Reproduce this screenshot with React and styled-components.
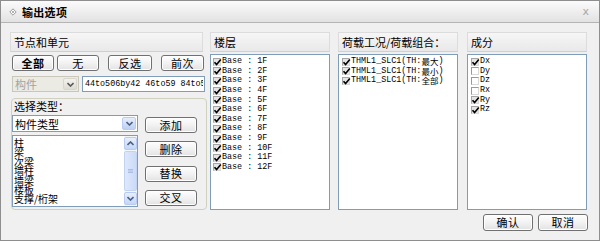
import React from "react";
import styled, { createGlobalStyle } from "styled-components";

const GlobalStyle = createGlobalStyle`
  html, body { margin: 0; padding: 0; background: #ffffff; }
  body { font-family: "Noto Sans CJK SC", "Noto Sans", sans-serif; font-size: 11px; color: #000; }
  * { box-sizing: border-box; }
`;

const Dialog = styled.div`
  width: 600px;
  height: 241px;
  border: 1px solid #8e8e8e;
  background: #f0f0f0;
  display: flex;
  flex-direction: column;
  overflow: hidden;
`;

const TitleBar = styled.div`
  height: 22px;
  flex: none;
  display: flex;
  align-items: center;
  padding: 0 10px 0 8px;
  background: linear-gradient(#fbfbfb, #e2e2e2);
  border-bottom: 1px solid #b4b4b4;
`;

const Title = styled.div`
  font-weight: bold;
  font-size: 11px;
  margin-left: 5px;
  flex: 1;
  letter-spacing: 0.3px;
`;

const Close = styled.div`
  font-family: "DejaVu Sans", sans-serif;
  font-size: 11px;
  color: #a8a8a8;
`;

const Body = styled.div`
  flex: 1;
  padding: 9px 12px 0 9px;
  display: flex;
  flex-direction: column;
`;

const Columns = styled.div`
  height: 178px;
  display: flex;
`;

const LeftCol = styled.div`
  width: 197px;
  display: flex;
  flex-direction: column;
`;

const Col = styled.div`
  width: ${(p) => p.$w}px;
  margin-left: ${(p) => p.$ml}px;
  display: flex;
  flex-direction: column;
`;

const Header = styled.div`
  height: 20px;
  width: ${(p) => (p.$w ? `${p.$w}px` : "auto")};
  flex: none;
  border: 1px solid #dcdcdc;
  border-bottom-color: #cfcfcf;
  background: linear-gradient(#f6f6f6, #e9e9e9);
  padding-left: 3px;
  line-height: 18px;
  font-size: 11px;
  white-space: nowrap;
`;

const ListBox = styled.div`
  flex: 1;
  margin-top: 2px;
  background: #fff;
  border: 1px solid #7f9db9;
  padding: 2px 0 0 ${(p) => p.$pl}px;
  overflow: hidden;
`;

const CheckRow = styled.div`
  height: 9.6px;
  display: flex;
  align-items: center;
  white-space: nowrap;
`;

const Box = styled.span`
  width: 8px;
  height: 8px;
  flex: none;
  border: 1px solid ${(p) => (p.$on ? "#a4a4a4" : "#9a9a9a")};
  border-right-color: #d8d8d8;
  border-bottom-color: #d8d8d8;
  background: ${(p) => (p.$on ? "#e4e4e4" : "#ffffff")};
  position: relative;
  margin-right: 1px;
`;

const Mark = styled.svg`
  position: absolute;
  left: -1px;
  top: -1px;
`;

const MonoText = styled.span`
  font-family: "Liberation Mono", "DejaVu Sans Mono", monospace;
  font-size: 8.4px;
  line-height: 9px;
  color: #000;
  white-space: pre;
`;

const CjkSmall = styled.span`
  font-family: "Noto Sans CJK SC", sans-serif;
  font-size: 8.5px;
  line-height: 9px;
`;

const BtnRow = styled.div`
  display: flex;
  margin-top: 3px;
  height: 16px;
`;

const Button = styled.div`
  width: ${(p) => p.$w}px;
  height: ${(p) => p.$h || 16}px;
  margin-left: ${(p) => p.$ml || 0}px;
  flex: none;
  border: 1px solid #707070;
  border-radius: 3px;
  background: linear-gradient(#fefefe, #f2f2f2 50%, #e2e2e2);
  box-shadow: inset 0 0 0 1px #ffffff;
  display: flex;
  align-items: center;
  justify-content: center;
  font-size: 11px;
  font-weight: ${(p) => (p.$bold ? "bold" : "normal")};
  letter-spacing: 0.5px;
  line-height: 1;
`;

const InputRow = styled.div`
  display: flex;
  margin-top: 5px;
  height: 16px;
`;

const Select = styled.div`
  width: ${(p) => p.$w}px;
  height: ${(p) => p.$h}px;
  margin-left: ${(p) => p.$ml || 0}px;
  flex: none;
  display: flex;
  align-items: stretch;
  border: 1px solid ${(p) => (p.$disabled ? "#c9c7ba" : "#7f9db9")};
  background: ${(p) => (p.$disabled ? "#ebebe4" : "#ffffff")};
  color: ${(p) => (p.$disabled ? "#a3a3a3" : "#000")};
`;

const SelectText = styled.div`
  flex: 1;
  padding-left: 2px;
  font-size: 11px;
  display: flex;
  align-items: center;
`;

const ArrowBtn = styled.div`
  width: 14px;
  margin: 1px;
  border-radius: 2px;
  display: flex;
  align-items: center;
  justify-content: center;
  background: ${(p) =>
    p.$disabled ? "linear-gradient(#f2f2ee, #dedcd2)" : "linear-gradient(#e6eefc, #bcd0f4)"};
  border: 1px solid ${(p) => (p.$disabled ? "#d8d6cc" : "#b8cbf0")};
`;

const TextInput = styled.div`
  flex: none;
  width: 123px;
  margin-left: 3px;
  border: 1px solid #7f9db9;
  background: #fff;
  padding-left: 2px;
  overflow: hidden;
  display: flex;
  align-items: center;
`;

const ClipText = styled(MonoText)`
  display: block;
  overflow: hidden;
  max-width: 118px;
`;

const GroupBox = styled.div`
  flex: 1;
  margin-top: 6px;
  margin-left: 1px;
  border: 1px solid #d0d0bf;
  border-radius: 4px;
  display: flex;
  flex-direction: column;
`;

const GroupLabel = styled.div`
  height: 14px;
  line-height: 14px;
  padding-left: 2px;
  font-size: 11px;
`;

const GroupGrid = styled.div`
  display: grid;
  grid-template-columns: 126px 52px;
  column-gap: 7px;
  margin-top: 2px;
`;

const Stack = styled.div`
  display: flex;
  flex-direction: column;
  gap: ${(p) => p.$gap}px;
  margin-top: ${(p) => p.$mt || 0}px;
`;

const TypeList = styled.div`
  height: 72px;
  border: 1px solid #7f9db9;
  background: #fff;
  display: flex;
  overflow: hidden;
`;

const TypeItems = styled.div`
  flex: 1;
  padding: 2px 0 0 1px;
  font-size: 10px;
  line-height: 9.4px;
`;

const ScrollBar = styled.div`
  width: 13px;
  display: flex;
  flex-direction: column;
  background: #f4f6fb;
  padding: 1px 0;
`;

const ScrollBtn = styled.div`
  height: 13px;
  border: 1px solid #b8cbf0;
  border-radius: 2px;
  background: linear-gradient(#e8effc, #c4d6f6);
  display: flex;
  align-items: center;
  justify-content: center;
`;

const Thumb = styled.div`
  flex: 1;
  margin: 1px 0;
  border: 1px solid #c2d2f0;
  border-radius: 2px;
  background: linear-gradient(90deg, #dfe8fb, #cbdaf6);
  display: flex;
  align-items: center;
  justify-content: center;
`;

const Footer = styled.div`
  display: flex;
  justify-content: flex-end;
  gap: 5px;
  margin-top: 4px;
  margin-right: -1px;
`;

const Check = ({ on }) => (
  <Box $on={on}>
    {on && (
      <Mark width="9" height="9" viewBox="0 0 9 9">
        <path d="M1.5 4.2 L3.6 6.6 L7.8 1.6" stroke="#000" strokeWidth="1.6" fill="none" />
      </Mark>
    )}
  </Box>
);

const Chevron = ({ up, color = "#4d6185" }) => (
  <svg width="7" height="5" viewBox="0 0 7 5">
    <path
      d={up ? "M0.5 4 L3.5 1 L6.5 4" : "M0.5 1 L3.5 4 L6.5 1"}
      stroke={color}
      strokeWidth="1.6"
      fill="none"
    />
  </svg>
);

const floors = ["1F", "2F", "3F", "4F", "5F", "6F", "7F", "8F", "9F", "10F", "11F", "12F"];
const loads = ["最大", "最小", "全部"];
const comps = [
  ["Dx", true],
  ["Dy", false],
  ["Dz", false],
  ["Rx", false],
  ["Ry", true],
  ["Rz", true],
];
const types = ["柱", "梁", "次梁", "墙柱", "墙梁", "楼板", "支撑/桁架"];

export default function App() {
  return (
    <>
      <GlobalStyle />
      <Dialog>
        <TitleBar>
          <svg width="8" height="8" viewBox="0 0 8 8">
            <path d="M4 0.8 L7.2 4 L4 7.2 L0.8 4 Z" fill="#fff" stroke="#9a9a9a" strokeWidth="1" />
            <circle cx="4" cy="4" r="1" fill="#9a9a9a" />
          </svg>
          <Title>输出选项</Title>
          <Close>x</Close>
        </TitleBar>
        <Body>
          <Columns>
            <LeftCol>
              <Header $w={193}>节点和单元</Header>
              <BtnRow>
                <Button $w={42} $ml={2} $bold>全部</Button>
                <Button $w={42} $ml={3}>无</Button>
                <Button $w={44} $ml={9}>反选</Button>
                <Button $w={43} $ml={9}>前次</Button>
              </BtnRow>
              <InputRow>
                <Select $w={67} $h={16} $ml={2} $disabled>
                  <SelectText>构件</SelectText>
                  <ArrowBtn $disabled>
                    <Chevron color="#5a5a5a" />
                  </ArrowBtn>
                </Select>
                <TextInput>
                  <ClipText>44to506by42 46to59 84to5(</ClipText>
                </TextInput>
              </InputRow>
              <GroupBox>
                <GroupLabel>选择类型：</GroupLabel>
                <GroupGrid>
                  <Stack $gap={3}>
                    <Select $w={126} $h={17}>
                      <SelectText>构件类型</SelectText>
                      <ArrowBtn>
                        <Chevron />
                      </ArrowBtn>
                    </Select>
                    <TypeList>
                      <TypeItems>
                        {types.map((t) => (
                          <div key={t}>{t}</div>
                        ))}
                      </TypeItems>
                      <ScrollBar>
                        <ScrollBtn>
                          <Chevron up />
                        </ScrollBtn>
                        <Thumb>
                          <svg width="5" height="4" viewBox="0 0 5 4">
                            <path d="M0 0.5 H5 M0 2 H5 M0 3.5 H5" stroke="#9fb4de" strokeWidth="0.8" />
                          </svg>
                        </Thumb>
                        <ScrollBtn>
                          <Chevron />
                        </ScrollBtn>
                      </ScrollBar>
                    </TypeList>
                  </Stack>
                  <Stack $gap={8.3} $mt={2}>
                    <Button $w={52}>添加</Button>
                    <Button $w={52}>删除</Button>
                    <Button $w={52}>替换</Button>
                    <Button $w={52}>交叉</Button>
                  </Stack>
                </GroupGrid>
              </GroupBox>
            </LeftCol>

            <Col $w={120} $ml={3}>
              <Header>楼层</Header>
              <ListBox $pl={2}>
                {floors.map((f) => (
                  <CheckRow key={f}>
                    <Check on />
                    <MonoText>{`Base : ${f}`}</MonoText>
                  </CheckRow>
                ))}
              </ListBox>
            </Col>

            <Col $w={120} $ml={8}>
              <Header>荷载工况/荷载组合：</Header>
              <ListBox $pl={3}>
                {loads.map((l) => (
                  <CheckRow key={l}>
                    <Check on />
                    <MonoText>THML1_SLC1(TH:</MonoText>
                    <CjkSmall>{l}</CjkSmall>
                    <MonoText>)</MonoText>
                  </CheckRow>
                ))}
              </ListBox>
            </Col>

            <Col $w={120} $ml={9}>
              <Header>成分</Header>
              <ListBox $pl={3}>
                {comps.map(([c, on]) => (
                  <CheckRow key={c}>
                    <Check on={on} />
                    <MonoText>{c}</MonoText>
                  </CheckRow>
                ))}
              </ListBox>
            </Col>
          </Columns>
          <Footer>
            <Button $w={50} $h={17}>确认</Button>
            <Button $w={50} $h={17}>取消</Button>
          </Footer>
        </Body>
      </Dialog>
    </>
  );
}
